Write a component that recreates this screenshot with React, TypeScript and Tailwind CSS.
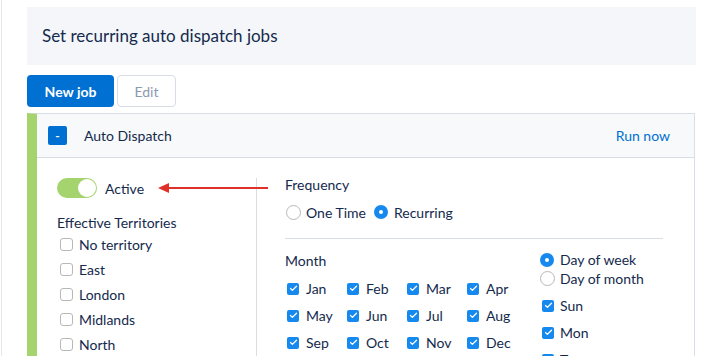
import { Check } from 'lucide-react';

const territories = ['No territory', 'East', 'London', 'Midlands', 'North'];
const months = ['Jan', 'Feb', 'Mar', 'Apr', 'May', 'Jun', 'Jul', 'Aug', 'Sep', 'Oct', 'Nov', 'Dec'];
const weekdays = ['Sun', 'Mon', 'Tue'];

function CheckBox({ checked }: { checked?: boolean }) {
  if (checked) {
    return (
      <span className="flex h-[12px] w-[12px] flex-shrink-0 items-center justify-center rounded-[2px] bg-[#1589ee]">
        <Check size={9} strokeWidth={3.5} className="text-white" />
      </span>
    );
  }
  return (
    <span className="block h-[13px] w-[13px] flex-shrink-0 rounded-[3px] border border-[#b8b8b8] bg-white" />
  );
}

function Radio({ checked }: { checked?: boolean }) {
  if (checked) {
    return (
      <span className="flex h-[14px] w-[14px] flex-shrink-0 items-center justify-center rounded-full bg-[#1589ee]">
        <span className="h-[4px] w-[4px] rounded-full bg-white" />
      </span>
    );
  }
  return (
    <span className="block h-[15px] w-[15px] flex-shrink-0 rounded-full border border-[#b8b8b8] bg-white" />
  );
}

export default function App() {
  return (
    <div className="relative ml-px h-[356px] overflow-hidden border-l border-[#e3e7ee] bg-white pl-[25px] font-['Lato',sans-serif] text-[14px] text-[#142a4d]">
      {/* Page header */}
      <div className="mt-[7px] flex h-[58px] w-[669px] items-center bg-[#f4f6f9] pl-[15px] text-[17px]">
        Set recurring auto dispatch jobs
      </div>

      {/* Actions */}
      <div className="mt-[10px] flex gap-[3px]">
        <button className="h-[32px] w-[87px] rounded-[4px] bg-[#0070d2] text-[14px] font-bold text-white">
          New job
        </button>
        <button className="h-[32px] w-[59px] rounded-[4px] border border-[#d8dde6] bg-white text-[14px] text-[#8a9ab1]">
          Edit
        </button>
      </div>

      {/* Job card */}
      <div className="mt-[6px] w-[668px] border-l-[10px] border-r border-t border-l-[#a5d46f] border-r-[#d8dde6] border-t-[#d8dde6]">
        <div className="flex h-[44px] items-center border-b border-[#d8dde6] bg-[#f7f9fa] pl-[11px] pr-[24px]">
          <span className="flex h-[19px] w-[19px] items-center justify-center rounded-[2px] bg-[#0070d2] text-[12px] font-bold leading-none text-white">
            -
          </span>
          <span className="ml-[17px] flex-1">Auto Dispatch</span>
          <span className="text-[#0070d2]">Run now</span>
        </div>

        <div className="flex h-[200px]">
          {/* Left column */}
          <div className="mt-[20px] w-[220px] border-r border-[#d8dde6] pl-[20px]">
            <div className="flex h-[20px] items-center">
              <span className="flex h-[20px] w-[40px] items-center justify-end rounded-full bg-[#a5d46f] p-[1px]">
                <span className="h-[18px] w-[18px] rounded-full bg-white" />
              </span>
              <span className="ml-[8px]">Active</span>
            </div>
            <div className="mt-[14px] flex h-[20px] items-center">Effective Territories</div>
            {territories.map((t) => (
              <div key={t} className="flex h-[25px] items-center pl-[3px]">
                <CheckBox />
                <span className="ml-[6px]">{t}</span>
              </div>
            ))}
          </div>

          {/* Right column */}
          <div className="pl-[28px] pt-[16px]">
            <div className="flex h-[20px] items-center">Frequency</div>
            <div className="mt-[8px] flex h-[20px] items-center pl-px">
              <Radio />
              <span className="ml-[5px]">One Time</span>
              <span className="ml-[8px] flex"><Radio checked /></span>
              <span className="ml-[6px]">Recurring</span>
            </div>
            <div className="mt-[16px] w-[378px] border-t border-[#d8dde6]" />

            <div className="mt-[11px] flex">
              <div className="w-[255px]">
                <div className="flex h-[20px] items-center">Month</div>
                <div className="mt-[5px] grid grid-cols-[60px_60px_60px_60px]">
                  {months.map((m) => (
                    <div key={m} className="flex h-[27px] items-center pl-[2px]">
                      <CheckBox checked />
                      <span className="ml-[7px]">{m}</span>
                    </div>
                  ))}
                </div>
              </div>
              <div>
                <div className="flex h-[19px] items-center">
                  <Radio checked />
                  <span className="ml-[6px]">Day of week</span>
                </div>
                <div className="flex h-[19px] items-center">
                  <Radio />
                  <span className="ml-[5px]">Day of month</span>
                </div>
                <div className="mt-[4px]">
                  {weekdays.map((d) => (
                    <div key={d} className="flex h-[27px] items-center pl-[2px]">
                      <CheckBox checked />
                      <span className="ml-[6px]">{d}</span>
                    </div>
                  ))}
                </div>
              </div>
            </div>
          </div>
        </div>
      </div>

      {/* Annotation arrow */}
      <svg className="absolute left-[156px] top-[182px]" width="112" height="12" viewBox="0 0 112 12">
        <line x1="8" y1="6" x2="110" y2="6" stroke="#e0302a" strokeWidth="2" />
        <polygon points="0,6 11,1 11,11" fill="#e0302a" />
      </svg>
    </div>
  );
}
